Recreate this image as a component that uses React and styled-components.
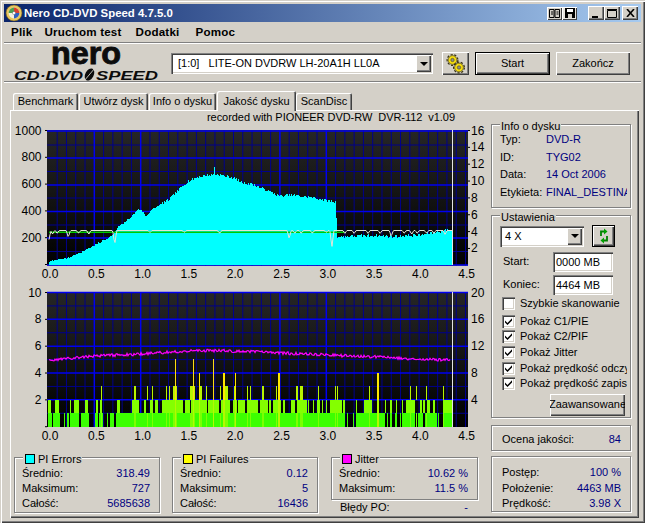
import React from "react";
import styled, { createGlobalStyle } from "styled-components";

const FACE = "#d4d0c8";
const UI = `"Liberation Sans", Arial, sans-serif`;

const Global = createGlobalStyle`
  html, body { margin: 0; padding: 0; background: ${FACE}; }
  * { box-sizing: border-box; }
  body { font: 11px/13px ${UI}; color: #000; }
`;

const Window = styled.div`
  width: 645px; height: 523px; padding: 4px; background: ${FACE};
  display: flex; flex-direction: column; overflow: hidden;
  box-shadow: inset 1px 1px 0 ${FACE}, inset 2px 2px 0 #fff, inset -1px -1px 0 #404040, inset -2px -2px 0 #808080;
`;
const TitleBar = styled.div`
  height: 18px; flex: none; display: flex; align-items: center; padding: 0 3px 0 1px;
  background: linear-gradient(90deg, #0a246a, #a6caf0);
`;
const TitleText = styled.span`
  color: #fff; font: bold 11.4px/18px ${UI}; margin-left: 1px; flex: 1; white-space: nowrap;
`;
const TitleExtra = styled.span`
  width: 15px; height: 13px; display: flex; align-items: center; justify-content: center;
  background: ${p => (p.$on ? "#e8e6e0" : FACE)};
  box-shadow: inset 1px 1px 0 #fff, inset -1px -1px 0 #404040;
`;
const ExtraGroup = styled.div` display: flex; gap: 0; margin-right: 11px; `;
const WinBtn = styled.span`
  width: 16px; height: 14px; display: flex; align-items: center; justify-content: center; background: ${FACE};
  margin-left: ${p => p.$gap || 0}px;
  box-shadow: inset 1px 1px 0 #fff, inset -1px -1px 0 #404040, inset -2px -2px 0 #808080;
`;
const MenuBar = styled.div`
  height: 20px; flex: none; display: flex; align-items: center; padding-left: 7px;
  font: bold 11.6px/20px ${UI}; letter-spacing: 0.2px;
`;
const MenuItem = styled.span` margin-right: ${p => p.$mr}px; white-space: nowrap; `;
const Separator = styled.div`
  height: 2px; flex: none; border-top: 1px solid #808080; border-bottom: 1px solid #fff;
`;
const HeaderRow = styled.div`
  height: 37px; flex: none; display: flex; align-items: center; padding-top: 2px;
`;
const LogoSvg = styled.svg` width: 167px; height: 37px; flex: none; overflow: visible; margin-top: -2px; `;
const Sunken = styled.div`
  background: #fff;
  box-shadow: inset 1px 1px 0 #808080, inset 2px 2px 0 #404040, inset -1px -1px 0 #fff, inset -2px -2px 0 ${FACE};
`;
const Combo = styled(Sunken)`
  width: ${p => p.$w}px; height: ${p => p.$h}px; flex: none; display: flex; align-items: center;
  padding: 2px; font: 11px/13px ${UI};
`;
const ComboText = styled.span` flex: 1; white-space: pre; padding-left: ${p => p.$pad}px; `;
const ComboArrow = styled.span`
  width: 15px; align-self: stretch; background: ${FACE}; display: flex; align-items: center; justify-content: center;
  box-shadow: inset 1px 1px 0 #fff, inset -1px -1px 0 #404040, inset -2px -2px 0 #808080;
  &::after { content: ""; border: 4px solid transparent; border-top-color: #000; border-bottom: 0; }
`;
const Button = styled.div`
  width: ${p => p.$w}px; height: ${p => p.$h || 23}px; flex: none; margin-left: ${p => p.$ml || 0}px;
  display: flex; align-items: center; justify-content: center; white-space: nowrap; overflow: hidden;
  background: ${FACE}; font: 11px/13px ${UI};
  box-shadow: ${p => p.$def
    ? "inset 0 0 0 1px #000, inset 2px 2px 0 #fff, inset -2px -2px 0 #404040, inset -3px -3px 0 #808080"
    : "inset 1px 1px 0 #fff, inset -1px -1px 0 #404040, inset -2px -2px 0 #808080"};
`;
const TabRow = styled.div`
  height: 27px; flex: none; display: flex; align-items: flex-end; padding: 0 0 0 9px;
`;
const Tab = styled.div`
  width: ${p => p.$w}px; height: ${p => (p.$on ? 20 : 17)}px; margin-right: ${p => (p.$on ? 0 : 1)}px;
  margin-bottom: ${p => (p.$on ? -1 : 0)}px; display: flex; align-items: center; justify-content: center; white-space: nowrap;
  background: ${FACE}; position: relative; z-index: ${p => (p.$on ? 1 : 0)}; border-radius: 2px 2px 0 0;
  box-shadow: inset 1px 1px 0 #fff, inset -1px 0 0 #404040, inset -2px 0 0 #808080;
`;
const Panel = styled.div`
  margin: 0 2px 0 6px; height: 408px; flex: none; padding: 2px 2px 0 2px;
  display: grid; grid-template-columns: 479px 140px; align-items: start;
  box-shadow: inset 1px 1px 0 #fff, inset -1px -1px 0 #404040, inset -2px -2px 0 #808080;
`;
const LeftCol = styled.div` display: flex; flex-direction: column; `;
const ChartTitle = styled.div`
  height: 12px; line-height: 11px; padding-right: 36px; text-align: right; white-space: pre; letter-spacing: -0.05px;
`;
const ChartSvg = styled.svg` display: block; width: 479px; `;
const AxisText = styled.text` font: 12px ${UI}; fill: #000; `;
const StatsRow = styled.div` display: flex; margin: 9px 0 0 2px; `;
const Group = styled.fieldset`
  margin: ${p => p.$mt || 0}px 0 0 ${p => p.$ml || 0}px; padding: 0; min-width: 0; border: 1px solid #808080;
  width: ${p => p.$w || 140}px; height: ${p => p.$h}px; flex: none;
  box-shadow: inset 1px 1px 0 #fff, 1px 1px 0 #fff;
`;
const Legend = styled.legend`
  padding: 2px 1px 0; margin-left: ${p => p.$ml || 8}px; height: 13px; line-height: 12px; background: ${FACE};
  display: flex; align-items: center; white-space: nowrap;
`;
const Swatch = styled.span`
  width: 8px; height: 8px; margin: 0 3px 0 1px; background: ${p => p.$c}; border: 1px solid #000; box-sizing: content-box;
`;
const StatRows = styled.div` padding: 2px 9px 0 7px; `;
const StatRow = styled.div`
  height: 15px; line-height: 15px; display: flex; justify-content: space-between; white-space: nowrap;
`;
const Value = styled.span` color: #000080; `;
const JitterCol = styled.div` display: flex; flex-direction: column; margin-left: 13px; `;
const Errors = styled(StatRow)` margin: 1px 10px 0 9px; height: 13px; line-height: 13px; `;
const Sidebar = styled.div` display: flex; flex-direction: column; margin-top: 6px; `;
const InfoRow = styled.div`
  height: 17.5px; line-height: 17.5px; display: flex; padding-left: 8px; margin-right: 3px; white-space: nowrap; overflow: hidden;
`;
const InfoLabel = styled.span` width: 46px; flex: none; `;
const SpeedRow = styled.div` display: flex; align-items: center; margin: 3px 0 3px 8px; `;
const FieldRow = styled.div` display: flex; align-items: center; height: 23px; padding-left: 11px; `;
const FieldLabel = styled.span` width: 50px; flex: none; `;
const Field = styled(Sunken)` width: 60px; height: 20px; line-height: 16px; padding: 2px 3px; `;
const CheckRow = styled.div`
  height: ${p => p.$h}px; margin-top: ${p => p.$mt || 0}px; display: flex; align-items: center;
  padding-left: 10px; margin-right: 3px; white-space: nowrap; overflow: hidden;
`;
const CheckBox = styled(Sunken)`
  width: 13px; height: 13px; flex: none; margin-right: 5px; display: flex; align-items: center; justify-content: center;
`;
const AdvancedWrap = styled.div` display: flex; justify-content: flex-end; margin: 3px 5px 0 0; `;
const PlainBox = styled.div`
  width: 140px; height: ${p => p.$h}px; margin-top: ${p => p.$mt}px; border: 1px solid #808080; padding: ${p => p.$pad || "0 9px 0 10px"};
  box-shadow: inset 1px 1px 0 #fff, 1px 1px 0 #fff;
`;
const ScoreRow = styled(StatRow)` height: 24px; line-height: 26px; `;
const StatusRows = styled.div` display: flex; flex-direction: column; gap: 0.5px; `;

/* ---- chart data ---- */
function rng(seed) {
  let s = seed;
  return () => { s = (s * 1664525 + 1013904223) >>> 0; return s / 4294967296; };
}
const X = gb => 47.9 + 92.8 * gb;
function interp(tbl, gb) {
  for (let i = 1; i < tbl.length; i++) {
    if (gb <= tbl[i][0]) {
      const [a, av] = tbl[i - 1], [b, bv] = tbl[i];
      return av + ((bv - av) * (gb - a)) / (b - a);
    }
  }
  return tbl[tbl.length - 1][1];
}
const PIE = [[0, 25], [0.05, 35], [0.1, 42], [0.2, 48], [0.3, 80], [0.4, 110], [0.5, 150], [0.6, 185], [0.7, 225], [0.75, 285], [0.8, 305], [0.9, 365], [0.97, 420], [1.02, 400], [1.05, 360], [1.1, 405], [1.2, 450], [1.3, 490], [1.4, 560], [1.5, 625], [1.6, 655], [1.7, 670], [1.8, 680], [1.9, 665], [2.0, 650], [2.1, 615], [2.2, 605], [2.5, 515], [2.6, 525], [2.8, 510], [3.0, 485], [3.1, 470], [3.11, 212], [3.5, 222], [3.7, 215], [4.0, 225], [4.3, 262], [4.35, 255]];
function piePath() {
  const r = rng(7);
  let d = "";
  for (let x = 49; x <= 452; x++) {
    const gb = (x - 47.9) / 92.8;
    const noise = gb > 1.2 ? (r() - 0.55) * (gb > 3.1 ? 24 : 20) : (r() - 0.5) * 10;
    let v = Math.max(10, interp(PIE, gb) + noise);
    if (x === 214) v = 735;
    const y = 265 - (v / 1000) * 134;
    d += `M${x + 0.5} 265V${y.toFixed(1)}`;
  }
  return d;
}
const DIPS = [[0.01, 10], [0.05, 4], [0.1, 3], [0.22, 7], [0.33, 3], [0.44, 4], [0.72, 14], [1.1, 2], [1.47, 2], [1.85, 3], [2.6, 8], [2.66, 3], [2.73, 3], [2.85, 3], [3.0, 2], [3.06, 17], [3.2, 3], [3.3, 3], [3.45, 3], [3.58, 3], [3.7, 6], [3.84, 3], [3.92, 4], [3.98, 3], [4.08, 3], [4.16, 3], [4.28, 4]];
function speedLine() {
  const pts = [];
  for (let x = 49; x <= 452; x++) {
    const gb = (x - 47.9) / 92.8;
    let y = 230.5;
    for (const [g, h] of DIPS) {
      const dx = Math.abs(gb - g) * 92.8;
      if (dx < 2) y = Math.max(y, 230.5 + h * (1 - dx / 2));
    }
    pts.push(`${x},${y.toFixed(1)}`);
  }
  return pts.join(" ");
}
const JIT = [[0, 360.5], [0.5, 356], [1.0, 354], [1.5, 351], [1.8, 350.5], [2.2, 351.7], [3.0, 355], [3.5, 356.7], [4.0, 359.3], [4.3, 360]];
function jitterLine() {
  const r = rng(23), pts = [];
  for (let x = 49; x <= 450; x++) {
    const gb = (x - 47.9) / 92.8;
    pts.push(`${x},${(interp(JIT, gb) + (r() - 0.5) * 2.8).toFixed(1)}`);
  }
  return pts.join(" ");
}
const B = 426.7, U = 13.47;
const L = o => z => o + z / 3;
const a = L(10), b = L(250);
const pair = (f, arr) => arr.map(([s, e]) => [Math.round(f(s)), Math.max(Math.round(f(e)), Math.round(f(s)) + 1)]);
const BAND1 = [
  ...pair(a, [[113, 125], [129, 150], [162, 165], [170, 178], [181, 208], [212, 238], [255, 265], [268, 280], [292, 295], [300, 312], [318, 720]]),
  ...pair(b, [[0, 285], [290, 293], [310, 313], [318, 404], [412, 415], [420, 425], [435, 442], [450, 452], [456, 495], [505, 520], [525, 560], [565, 568], [578, 608]]),
];
const BAND2 = [
  ...pair(a, [[115, 123], [135, 147], [180, 184], [192, 208], [225, 234], [258, 264], [270, 276], [322, 330], [366, 388], [402, 408], [420, 430], [436, 444], [456, 520], [524, 540], [542, 590], [594, 628], [634, 660], [668, 680], [684, 706], [710, 720]]),
  ...pair(b, [[0, 24], [30, 55], [58, 62], [68, 92], [98, 105], [122, 135], [140, 170], [175, 178], [190, 193], [200, 210], [215, 220], [227, 230], [240, 275], [280, 285], [318, 320], [342, 365], [380, 385], [405, 408], [420, 425], [438, 442], [456, 460], [468, 495], [510, 515], [520, 525], [532, 540], [548, 556], [580, 605]]),
];
const BAND3 = [
  ...pair(a, [[273, 276], [372, 378], [411, 414], [425, 428], [469, 472], [476, 480], [490, 500], [541, 555], [570, 576], [587, 590], [630, 633], [643, 654], [671, 674], [711, 714]]),
  ...pair(b, [[0, 3], [37, 41], [79, 82], [139, 143], [150, 160], [204, 207], [254, 257], [260, 264], [357, 360], [479, 482], [497, 500], [529, 532], [579, 582]]),
];
const YELLOW4 = [
  ...pair(a, [[566, 570], [640, 645], [675, 678]]),
  ...pair(b, [[84, 90], [381, 387]]),
];
const YELLOW5 = pair(a, [[494, 497], [549, 552], [609, 612]]);

const rects = (spans, lo, hi, fill) => spans.map(([s, e], i) => (
  <rect key={fill + lo + i} x={s} width={e - s} y={(B - hi * U).toFixed(1)} height={((hi - lo) * U).toFixed(1)} fill={fill} />
));

function Grid({ top, bottom, hMinor, hMajor, gid }) {
  const v = [];
  for (let i = 1; i <= 45; i++) {
    const x = X(i / 10);
    const major = [5, 10, 25, 30].includes(i);
    v.push(<line key={i} x1={x} x2={x} y1={top} y2={bottom} stroke={major ? "#0000f0" : "#00008c"} strokeWidth={major ? 1.5 : 1} />);
  }
  return (
    <g>
      <defs>
        <linearGradient id={gid} x1="0" y1="0" x2="0" y2="1">
          <stop offset="0" stopColor="#262626" />
          <stop offset="1" stopColor="#000" />
        </linearGradient>
      </defs>
      <rect x="47" y={top} width="421" height={bottom - top} fill={`url(#${gid})`} />
      {hMinor.map(y => <line key={y} x1="47" x2="468" y1={y} y2={y} stroke="#00008c" />)}
      {v}
      {hMajor.map(y => <line key={y} x1="47" x2="468" y1={y} y2={y} stroke="#0000f0" strokeWidth="1.5" />)}
    </g>
  );
}

function Chart1() {
  const majors = [131, 158, 185, 211.5, 238, 265];
  const minors = [145, 171.5, 198, 225, 251.5];
  const left = ["1000", "800", "600", "400", "200"];
  const right = [16, 14, 12, 10, 8, 6, 4, 2];
  const pieD = React.useMemo(piePath, []);
  const speed = React.useMemo(speedLine, []);
  return (
    <ChartSvg viewBox="12 124 479 160" height="160">
      <Grid top={130} bottom={265.5} hMinor={minors} hMajor={majors} gid="g1" />
      <path d={pieD} stroke="#00ffff" strokeWidth="1" fill="none" shapeRendering="crispEdges" />
      <line x1="49" x2={X(3.2)} y1="232.3" y2="232.3" stroke="#00c800" strokeWidth="1.6" />
      <polyline points={speed} fill="none" stroke="#e4e4d8" strokeWidth="1" />
      <line x1="452.5" x2="452.5" y1="130" y2="265" stroke="#e4e4e4" />
      {left.map((t, i) => <AxisText key={t} x="41.5" y={130 + i * 26.8 + 4.5} textAnchor="end">{t}</AxisText>)}
      {right.map((t, i) => <AxisText key={t} x="471" y={130 + i * 16.85 + 4.5}>{t}</AxisText>)}
      {right.map((t, i) => <line key={t} x1="468" x2="470" y1={130.5 + i * 16.85} y2={130.5 + i * 16.85} stroke="#000" />)}
      {[...left, ""].map((t, i) => <line key={i} x1="45" x2="47" y1={130.5 + i * 26.8} y2={130.5 + i * 26.8} stroke="#000" />)}
      {[0, 0.5, 1, 1.5, 2, 2.5, 3, 3.5, 4, 4.5].map(g => (
        <AxisText key={g} x={50 + 92.6 * g} y="278" textAnchor="middle">{g.toFixed(1)}</AxisText>
      ))}
    </ChartSvg>
  );
}
function Chart2() {
  const ys = i => 292.5 + i * 13.42;
  const jit = React.useMemo(jitterLine, []);
  const left = ["10", "8", "6", "4", "2"];
  const right = ["20", "16", "12", "8", "4"];
  return (
    <ChartSvg viewBox="12 284 479 158" height="158">
      <Grid top={292} bottom={427} gid="g2"
        hMinor={[1, 3, 5, 7, 9].map(ys)} hMajor={[0, 2, 4, 6, 8].map(ys)} />
      <g shapeRendering="crispEdges">
        {rects(BAND1, 0, 1, "#3cff00")}
        {rects(BAND2, 1, 2, "#84ff00")}
        {rects(BAND3, 0, 1, "#7cff00")}
        {rects(BAND3, 2, 3, "#b8f400")}
        {rects(YELLOW4, 0, 2, "#b4f800")}
        {rects(YELLOW4, 2, 4, "#ffe800")}
        {rects(YELLOW5, 0, 2, "#b4f800")}
        {rects(YELLOW5, 2, 5, "#ffdc10")}
      </g>
      <polyline points={jit} fill="none" stroke="#ff00ff" strokeWidth="1.2" />
      <line x1="452.5" x2="452.5" y1="292" y2="427" stroke="#e4e4e4" />
      {left.map((t, i) => <AxisText key={t} x="41.5" y={ys(i * 2) + 4} textAnchor="end">{t}</AxisText>)}
      {right.map((t, i) => <AxisText key={t} x="471" y={ys(i * 2) + 4}>{t}</AxisText>)}
      {[0, 2, 4, 6, 8, 10].map(i => <line key={i} x1="45" x2="47" y1={ys(i)} y2={ys(i)} stroke="#000" />)}
      {[0, 0.5, 1, 1.5, 2, 2.5, 3, 3.5, 4, 4.5].map(g => (
        <AxisText key={g} x={50 + 92.6 * g} y="440" textAnchor="middle">{g.toFixed(1)}</AxisText>
      ))}
    </ChartSvg>
  );
}

/* ---- icons ---- */
const AppIcon = () => (
  <svg width="18" height="18" viewBox="0 0 18 18">
    <circle cx="9" cy="9" r="8" fill="#e8c860" stroke="#7a5a10" strokeWidth="0.6" />
    <circle cx="9" cy="9" r="5.4" fill="#f4f0e0" />
    <path d="M9 9 L9 3.6 A5.4 5.4 0 0 1 14.4 9Z" fill="#d84030" />
    <path d="M9 9 L14.4 9 A5.4 5.4 0 0 1 9 14.4Z" fill="#3060c0" />
    <path d="M9 9 L3.6 9 A5.4 5.4 0 0 1 9 3.6Z" fill="#50a050" />
    <circle cx="9" cy="9" r="1.6" fill="#fff" stroke="#555" strokeWidth="0.4" />
  </svg>
);
const BookIcon = () => (
  <svg width="11" height="9" viewBox="0 0 11 9" fill="none" stroke="#000">
    <path d="M.5.5h4.5v8H.5zM6 .5h4.5v8H6z" /><path d="M2 3h2M2 5h2M7.500 3h2M7.500 5h2" />
  </svg>
);
const SaveIcon = () => (
  <svg width="10" height="10" viewBox="0 0 10 10">
    <path d="M0 0h10v10H0z" fill="#000" /><path d="M2 1h6v3H2z" fill="#fff" /><path d="M3 6h4v4H3z" fill="#d4d0c8" />
  </svg>
);
const MinIcon = () => <svg width="10" height="9" viewBox="0 0 10 9"><path d="M1 7h6v2H1z" fill="#000" /></svg>;
const MaxIcon = () => <svg width="10" height="9" viewBox="0 0 10 9" fill="none"><path d="M.5 1.500h9v7h-9z" stroke="#000" /><path d="M0 .5h10" stroke="#000" /></svg>;
const CloseIcon = () => <svg width="9" height="8" viewBox="0 0 9 8"><path d="M1 0l7 8M8 0L1 8" stroke="#000" strokeWidth="1.6" fill="none" /></svg>;
const Gear = ({ cx, cy }) => (
  <g>
    <circle cx={cx} cy={cy} r="5.4" fill="none" stroke="#3a3410" strokeWidth="1.2" strokeDasharray="2.2 1.6" />
    <circle cx={cx} cy={cy} r="4.4" fill="#f4dc10" stroke="#4a4010" strokeWidth="0.7" />
    <circle cx={cx} cy={cy} r="1.7" fill="#8c8c84" stroke="#3a3410" strokeWidth="0.5" />
  </g>
);
const GearsIcon = () => (
  <svg width="20" height="20" viewBox="0 0 20 20"><Gear cx={6.5} cy={6} /><Gear cx={13} cy={13.5} /></svg>
);
const RefreshIcon = () => (
  <svg width="12" height="16" viewBox="0 0 12 16" fill="none">
    <path d="M3 8V3.500h4" stroke="#008000" strokeWidth="1.800" /><path d="M6 .5l3.500 3L6 6.500z" fill="#00a000" />
    <path d="M9 8v4.500H5" stroke="#008000" strokeWidth="1.800" /><path d="M6 9.500l-3.500 3L6 15.500z" fill="#00a000" />
  </svg>
);
const CheckMark = () => (
  <svg width="9" height="9" viewBox="0 0 9 9"><path d="M1 3.500l2.500 2.500L8 1.200V3.500L3.500 8 1 5.500z" fill="#000" /></svg>
);
const LogoText = styled.text` font-family: ${UI}; font-weight: bold; fill: #0c0c0c; `;
const Logo = () => (
  <LogoSvg viewBox="4 44 167 37">
    <LogoText x="51" y="64" fontSize="32" stroke="#0c0c0c" strokeWidth="0.9" textLength="70" lengthAdjust="spacingAndGlyphs">nero</LogoText>
    <LogoText x="14" y="80" fontSize="13.500" fontStyle="italic" textLength="69" lengthAdjust="spacingAndGlyphs">CD·DVD</LogoText>
    <ellipse cx="89.500" cy="74.500" rx="4.200" ry="6.500" transform="rotate(28 89.500 74.500)" fill="#0c0c0c" />
    <line x1="84" y1="81" x2="95" y2="68" stroke="#d4d0c8" strokeWidth="0.9" />
    <LogoText x="96" y="80" fontSize="13.500" fontStyle="italic" textLength="62" lengthAdjust="spacingAndGlyphs">SPEED</LogoText>
  </LogoSvg>
);

const Stat = ({ label, value }) => <StatRow><span>{label}</span><Value>{value}</Value></StatRow>;
const Check = ({ on, h, mt, children }) => (
  <CheckRow $h={h} $mt={mt}><CheckBox>{on && <CheckMark />}</CheckBox>{children}</CheckRow>
);

export default function App() {
  return (
    <Window>
      <Global />
      <TitleBar>
        <AppIcon />
        <TitleText>Nero CD-DVD Speed 4.7.5.0</TitleText>
        <ExtraGroup>
          <TitleExtra><BookIcon /></TitleExtra>
          <TitleExtra $on><SaveIcon /></TitleExtra>
        </ExtraGroup>
        <WinBtn><MinIcon /></WinBtn>
        <WinBtn><MaxIcon /></WinBtn>
        <WinBtn $gap={2}><CloseIcon /></WinBtn>
      </TitleBar>
      <MenuBar>
        <MenuItem $mr={12}>Plik</MenuItem>
        <MenuItem $mr={14}>Uruchom test</MenuItem>
        <MenuItem $mr={16}>Dodatki</MenuItem>
        <MenuItem $mr={0}>Pomoc</MenuItem>
      </MenuBar>
      <Separator />
      <HeaderRow>
        <Logo />
        <Combo $w={262} $h={21}>
          <ComboText $pad={5}>[1:0]   LITE-ON DVDRW LH-20A1H LL0A</ComboText>
          <ComboArrow />
        </Combo>
        <Button $w={27} $ml={9}><GearsIcon /></Button>
        <Button $w={75} $ml={6} $def>Start</Button>
        <Button $w={74} $ml={6}>Zakończ</Button>
      </HeaderRow>
      <Separator />
      <TabRow>
        <Tab $w={65}>Benchmark</Tab>
        <Tab $w={69}>Utwórz dysk</Tab>
        <Tab $w={67}>Info o dysku</Tab>
        <Tab $w={79} $on>Jakość dysku</Tab>
        <Tab $w={56}>ScanDisc</Tab>
      </TabRow>
      <Panel>
        <LeftCol>
          <ChartTitle>recorded with PIONEER DVD-RW  DVR-112  v1.09</ChartTitle>
          <Chart1 />
          <Chart2 />
          <StatsRow>
            <Group $w={146} $h={62}>
              <Legend><Swatch $c="#00ffff" />PI Errors</Legend>
              <StatRows>
                <Stat label="Średnio:" value="318.49" />
                <Stat label="Maksimum:" value="727" />
                <Stat label="Całość:" value="5685638" />
              </StatRows>
            </Group>
            <Group $w={146} $h={62} $ml={12}>
              <Legend><Swatch $c="#ffff00" />PI Failures</Legend>
              <StatRows>
                <Stat label="Średnio:" value="0.12" />
                <Stat label="Maksimum:" value="5" />
                <Stat label="Całość:" value="16436" />
              </StatRows>
            </Group>
            <JitterCol>
              <Group $w={147} $h={49}>
                <Legend><Swatch $c="#ff00ff" />Jitter</Legend>
                <StatRows>
                  <Stat label="Średnio:" value="10.62 %" />
                  <Stat label="Maksimum:" value="11.5 %" />
                </StatRows>
              </Group>
              <Errors><span>Błędy PO:</span><Value>-</Value></Errors>
            </JitterCol>
          </StatsRow>
        </LeftCol>
        <Sidebar>
          <Group $h={90}>
            <Legend>Info o dysku</Legend>
            <InfoRow><InfoLabel>Typ:</InfoLabel><Value>DVD-R</Value></InfoRow>
            <InfoRow><InfoLabel>ID:</InfoLabel><Value>TYG02</Value></InfoRow>
            <InfoRow><InfoLabel>Data:</InfoLabel><Value>14 Oct 2006</Value></InfoRow>
            <InfoRow><InfoLabel>Etykieta:</InfoLabel><Value>FINAL_DESTINATION</Value></InfoRow>
          </Group>
          <Group $h={209} $mt={1}>
            <Legend>Ustawienia</Legend>
            <SpeedRow>
              <Combo $w={84} $h={21}><ComboText $pad={3}>4 X</ComboText><ComboArrow /></Combo>
              <Button $w={23} $h={22} $ml={8} $def><RefreshIcon /></Button>
            </SpeedRow>
            <FieldRow><FieldLabel>Start:</FieldLabel><Field>0000 MB</Field></FieldRow>
            <FieldRow><FieldLabel>Koniec:</FieldLabel><Field>4464 MB</Field></FieldRow>
            <Check h={15}>Szybkie skanowanie</Check>
            <Check on h={14.5} mt={3}>Pokaż C1/PIE</Check>
            <Check on h={15}>Pokaż C2/PIF</Check>
            <Check on h={17}>Pokaż Jitter</Check>
            <Check on h={15}>Pokaż prędkość odczytu</Check>
            <Check on h={15}>Pokaż prędkość zapisu</Check>
            <AdvancedWrap><Button $w={75} $h={22}>Zaawansowane</Button></AdvancedWrap>
          </Group>
          <PlainBox $h={26} $mt={7}>
            <ScoreRow><span>Ocena jakości:</span><Value>84</Value></ScoreRow>
          </PlainBox>
          <PlainBox $h={56} $mt={5} $pad="8px 9px 0 10px">
            <StatusRows>
              <Stat label="Postęp:" value="100 %" />
              <Stat label="Położenie:" value="4463 MB" />
              <Stat label="Prędkość:" value="3.98 X" />
            </StatusRows>
          </PlainBox>
        </Sidebar>
      </Panel>
    </Window>
  );
}
